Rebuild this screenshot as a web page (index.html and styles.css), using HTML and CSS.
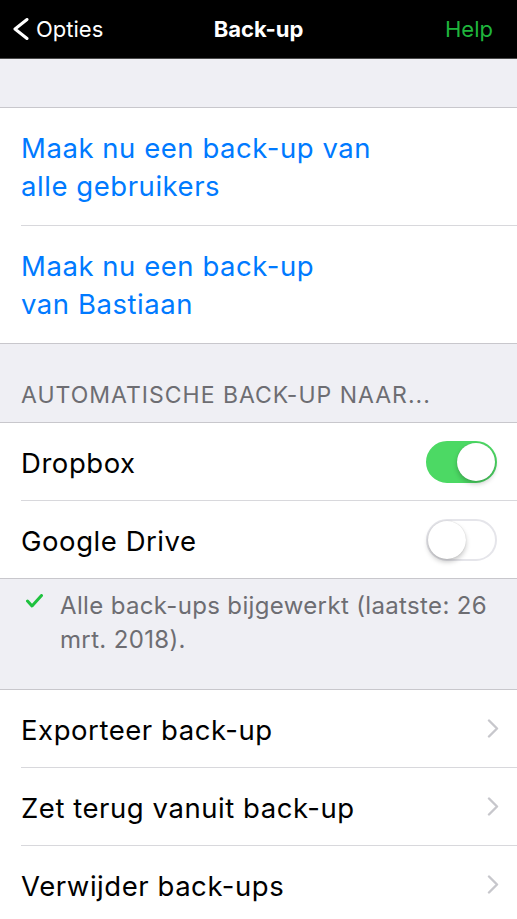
FILE: index.html
```html
<!DOCTYPE html>
<html lang="nl">
<head>
<meta charset="utf-8">
<title>Back-up</title>
<link rel="stylesheet" href="styles.css">
</head>
<body>
<div class="screen">
  <header class="nav">
    <div class="nav-left">
      <svg class="back-icon" width="18" height="22" viewBox="0 0 18 22"><polyline points="15,1.5 3,11 15,20.5" fill="none" stroke="#fff" stroke-width="3" stroke-linecap="round" stroke-linejoin="round"/></svg>
      <span>Opties</span>
    </div>
    <div class="nav-title">Back-up</div>
    <div class="nav-right">Help</div>
  </header>

  <div class="gap-top"></div>

  <section class="group">
    <div class="row row-tall action"><span>Maak nu een back-up van<br>alle gebruikers</span></div>
    <div class="row row-tall action"><span>Maak nu een back-up<br>van Bastiaan</span></div>
  </section>

  <div class="section-header">AUTOMATISCHE BACK-UP NAAR...</div>

  <section class="group">
    <div class="row">
      <span class="label">Dropbox</span>
      <span class="toggle on"><span class="knob"></span></span>
    </div>
    <div class="row">
      <span class="label">Google Drive</span>
      <span class="toggle"><span class="knob"></span></span>
    </div>
  </section>

  <div class="section-footer">
    <svg class="check" width="17" height="14" viewBox="0 0 17 14"><polyline points="1.5,7 6,12 15.5,1.5" fill="none" stroke="#1fc23f" stroke-width="3" stroke-linecap="round" stroke-linejoin="round"/></svg>
    <p>Alle back-ups bijgewerkt (laatste: 26 mrt. 2018).</p>
  </div>

  <section class="group">
    <div class="row">
      <span class="label">Exporteer back-up</span>
      <svg class="chevron" width="12" height="19" viewBox="0 0 12 19"><polyline points="2,1.5 10,9.5 2,17.5" fill="none" stroke="#c7c7cc" stroke-width="2.4" stroke-linecap="round" stroke-linejoin="round"/></svg>
    </div>
    <div class="row">
      <span class="label">Zet terug vanuit back-up</span>
      <svg class="chevron" width="12" height="19" viewBox="0 0 12 19"><polyline points="2,1.5 10,9.5 2,17.5" fill="none" stroke="#c7c7cc" stroke-width="2.4" stroke-linecap="round" stroke-linejoin="round"/></svg>
    </div>
    <div class="row">
      <span class="label">Verwijder back-ups</span>
      <svg class="chevron" width="12" height="19" viewBox="0 0 12 19"><polyline points="2,1.5 10,9.5 2,17.5" fill="none" stroke="#c7c7cc" stroke-width="2.4" stroke-linecap="round" stroke-linejoin="round"/></svg>
    </div>
  </section>
</div>
</body>
</html>
```

FILE: styles.css
```css
* { box-sizing: border-box; }
html, body { margin: 0; padding: 0; }
body {
  background: #efeff4;
  font-family: Inter, "Liberation Sans", sans-serif;
  -webkit-font-smoothing: antialiased;
}
.screen {
  width: 517px;
  min-height: 919px;
  overflow: hidden;
}
.nav {
  height: 59px;
  background: #000;
  border-bottom: 1px solid #4a4a4a;
  display: flex;
  align-items: center;
  justify-content: space-between;
  padding: 0 24px 0 12px;
  position: relative;
  color: #fff;
  font-size: 22px;
}
.nav-left {
  display: flex;
  align-items: center;
  gap: 6px;
}
.back-icon { display: block; }
.nav-title {
  position: absolute;
  left: 0;
  right: 0;
  text-align: center;
  font-weight: 700;
  pointer-events: none;
}
.nav-right { color: #1fb53c; }
.gap-top {
  height: 49px;
  border-bottom: 1px solid #c8c7cc;
}
.group {
  background: #fff;
  border-bottom: 1px solid #c8c7cc;
}
.row {
  height: 78px;
  display: flex;
  align-items: center;
  justify-content: space-between;
  margin-left: 21px;
  padding-right: 20px;
  border-bottom: 1px solid #d8d8dc;
  font-size: 27.5px;
  letter-spacing: 0.55px;
  color: #000;
}
.row .label { padding-top: 2px; }
.row:last-child {
  border-bottom: none;
  height: 77px;
}
.row-tall {
  height: 118px;
  line-height: 38px;
}
.row-tall:last-child { height: 117px; }
.action { color: #007aff; }
.section-header {
  height: 79px;
  display: flex;
  align-items: flex-end;
  padding: 0 21px 13px;
  font-size: 23px;
  letter-spacing: 1px;
  color: #6d6d72;
  border-bottom: 1px solid #c8c7cc;
}
.toggle {
  width: 71px;
  height: 42px;
  border-radius: 21px;
  background: #fff;
  border: 2px solid #e5e5ea;
  position: relative;
  display: block;
}
.toggle .knob {
  position: absolute;
  top: 0;
  left: 0;
  width: 38px;
  height: 38px;
  border-radius: 50%;
  background: #fff;
  box-shadow: 0 3px 5px rgba(0,0,0,0.22), 0 0 1px rgba(0,0,0,0.2);
}
.toggle.on {
  background: #4cd964;
  border-color: #4cd964;
}
.toggle.on .knob { left: 29px; }
.section-footer {
  height: 111px;
  border-bottom: 1px solid #c8c7cc;
  display: flex;
  align-items: flex-start;
  padding: 15px 20px 0 26px;
  gap: 17px;
  color: #6d6d72;
  font-size: 24px;
  letter-spacing: 0.35px;
}
.check { flex: none; margin-top: 0; }
.section-footer p {
  margin: 0;
  line-height: 34px;
  margin-top: -5px;
}
.chevron { display: block; flex: none; margin-right: -2px; }
```
